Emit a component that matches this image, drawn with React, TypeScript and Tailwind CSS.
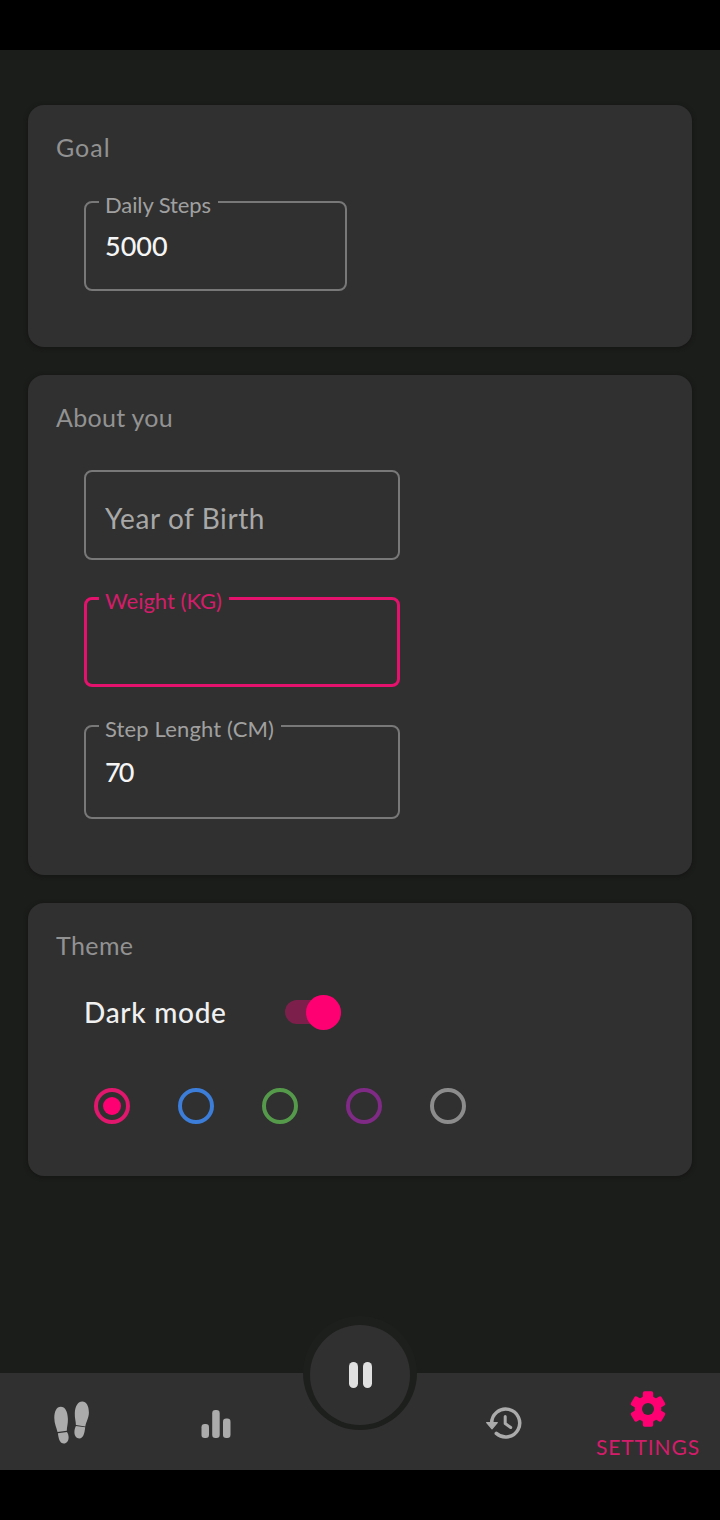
import { clsx } from "clsx";
import { ReactNode } from "react";

type CardProps = { title: string; className: string; titleClass: string; children: ReactNode };

const Card = ({ title, className, titleClass, children }: CardProps) => {
	return (
		<section
			className={clsx("rounded-2xl bg-[#303030] px-7 pt-[27px] shadow-[0_1px_4px_#141514]", className)}
		>
			<h2 className={clsx("h-[30px] text-[25px] leading-[30px] text-[#929292]", titleClass)}>{title}</h2>
			{children}
		</section>
	);
};

type FieldProps = {
	label: string;
	value?: string;
	className: string;
	legendClass: string;
	valueClass?: string;
	active?: boolean;
};

// outlined text field, the legend cuts the notch in the top border
const Field = ({ label, value, className, legendClass, valueClass, active }: FieldProps) => {
	return (
		<fieldset
			className={clsx(
				"ml-7 rounded-lg",
				active ? "border-3 border-[#e5126d]" : "border-2 border-[#787878]",
				className
			)}
		>
			<legend
				className={clsx(
					"h-5 pl-1.5 text-[22px] leading-[25px] whitespace-nowrap",
					active ? "ml-3 text-[#d41c6a]" : "ml-[13px] text-[#a0a0a0]",
					legendClass
				)}
			>
				{label}
			</legend>
			<p className={clsx("pl-[19px] text-[27px] leading-8 font-medium text-[#f5f5f5]", valueClass)}>{value}</p>
		</fieldset>
	);
};

const swatches = [
	{ name: "pink", ring: "border-[#e0176d]", dot: true },
	{ name: "blue", ring: "border-[#3b7dd8]", dot: false },
	{ name: "green", ring: "border-[#559a4b]", dot: false },
	{ name: "purple", ring: "border-[#7f2a85]", dot: false },
	{ name: "gray", ring: "border-[#8c8c8c]", dot: false },
];

const Footsteps = () => (
	<svg width="36" height="45" viewBox="0 0 36 45" fill="#ababab">
		<path d="M6.800 6.800C2.500 6.800.300 11.500.300 18c0 5.500 2.200 9.500 3.200 14l9.300-1.200c0-3.500 1.300-7 1.100-12C13.700 11.500 11 6.800 6.800 6.800Z" />
		<path d="m3.900 33.200 9.100-1.200c1 1.600 1.600 3.500 1.600 5.500 0 3.600-2 6-4.800 6-4 0-5.200-4.500-5.900-10.300Z" />
		<path d="M28.200 1.500c-4.200 0-7.100 4.700-7.400 11.500-.200 5 1.100 8.500 1.100 12l9.400 1.400c.800-4.700 3.600-8.400 3.600-13.900 0-6.500-2.500-11-6.700-11Z" />
		<path d="m21.900 26 9.300 1.300c-.700 6.300-1.900 11.200-5.900 11.200-2.800 0-4.900-2.700-4.900-6.200 0-2.300.500-4.500 1.500-6.300Z" />
	</svg>
);

const Bars = () => (
	<svg width="30" height="30" viewBox="0 0 30 30" fill="#ababab">
		<rect x="0.500" y="15" width="7.500" height="14" rx="3.200" />
		<rect x="11.200" y="1" width="7.500" height="28" rx="3.200" />
		<rect x="22" y="9.500" width="7.500" height="19.500" rx="3.200" />
	</svg>
);

const History = () => (
	<svg width="36" height="36" viewBox="0 0 36 36" fill="none" stroke="#ababab" strokeWidth="3.500">
		<path d="M5.700 18.500a14 14 0 1 1 4.600 9.900" strokeLinecap="round" />
		<path d="M19.200 11.500v7l5.500 4" strokeWidth="3" strokeLinecap="round" strokeLinejoin="round" />
		<path d="M.700 17.500h10.600l-5.300 6.300Z" fill="#ababab" strokeWidth="1.200" strokeLinejoin="round" />
	</svg>
);

const Gear = () => (
	<svg width="36" height="36" viewBox="-18 -18 36 36">
		<g fill="#ff0073">
			<circle r="13.300" />
			<rect x="-5.200" y="-17.700" width="10.400" height="35.400" rx="1.800" />
			<rect x="-5.200" y="-17.700" width="10.400" height="35.400" rx="1.800" transform="rotate(60)" />
			<rect x="-5.200" y="-17.700" width="10.400" height="35.400" rx="1.800" transform="rotate(120)" />
		</g>
		<circle r="6" fill="#303030" />
	</svg>
);

const App = () => {
	return (
		<div className="flex h-[1520px] w-[720px] flex-col bg-black py-[50px] font-[Lato,sans-serif]">
			<main className="flex flex-1 flex-col bg-[#1b1d1a] px-7 pt-[55px]">
				<Card title="Goal" titleClass="tracking-[1px]" className="h-[242px]">
					<Field
						label="Daily Steps"
						value="5000"
						className="mt-[30px] h-[99px] w-[263px]"
						legendClass="w-[119px] tracking-[-0.1px]"
						valueClass="pt-[18px]"
					/>
				</Card>
				<Card title="About you" titleClass="tracking-[0.3px]" className="mt-7 h-[500px]">
					<div className="mt-[38px] ml-7 flex h-[90px] w-[316px] items-center rounded-lg border-2 border-[#787878] pt-1.5 pl-[19px] text-[28px] tracking-[0.6px] text-[#a8a8a8]">
						Year of Birth
					</div>
					<Field
						label="Weight (KG)"
						className="mt-7 h-[99px] w-[316px]"
						legendClass="w-[130px]"
						active
					/>
					<Field
						label="Step Lenght (CM)"
						value="70"
						className="mt-[29px] h-[103px] w-[316px]"
						legendClass="w-[182px] tracking-[0.15px]"
						valueClass="pt-5 tracking-[-2px]"
					/>
				</Card>
				<Card title="Theme" titleClass="tracking-[0.4px]" className="mt-7 h-[273px]">
					<div className="mt-[34px] ml-7 flex h-9 items-center">
						<span className="w-[201px] text-[28px] leading-8 font-medium tracking-[0.7px] text-[#f0f0f0]">Dark mode</span>
						<div className="flex h-6 w-14 items-center justify-end rounded-full bg-[#7c1f4a]">
							<div className="size-[35px] shrink-0 rounded-full bg-[#ff0073]"></div>
						</div>
					</div>
					<div className="mt-[58px] ml-[38px] flex gap-12">
						{swatches.map((s) => (
							<div
								key={s.name}
								className={clsx("flex size-9 items-center justify-center rounded-full border-4", s.ring)}
							>
								{s.dot && <div className="size-[18px] rounded-full bg-[#ff0073]"></div>}
							</div>
						))}
					</div>
				</Card>
			</main>
			<nav className="relative grid h-[97px] grid-cols-5 bg-[#303030]">
				<div className="flex items-center justify-center pt-0.5">
					<Footsteps />
				</div>
				<div className="flex items-center justify-center pt-[5px]">
					<Bars />
				</div>
				<div className="absolute -top-[57px] left-[303px] flex size-[114px] items-center justify-center rounded-full bg-[#1d1f1c] pt-1">
					<div className="flex size-[100px] items-center justify-center gap-[5px] rounded-full bg-[#303030]">
						<div className="h-[26px] w-[9px] rounded-full bg-[#e0e0e0]"></div>
						<div className="h-[26px] w-[9px] rounded-full bg-[#e0e0e0]"></div>
					</div>
				</div>
				<div className="col-start-4 flex items-center justify-center pt-0.5">
					<History />
				</div>
				<div className="flex flex-col items-center pt-[18px]">
					<Gear />
					<span className="mt-2 text-[21px] leading-6 tracking-[0.9px] text-[#d41c6a]">SETTINGS</span>
				</div>
			</nav>
		</div>
	);
};

export default App;
